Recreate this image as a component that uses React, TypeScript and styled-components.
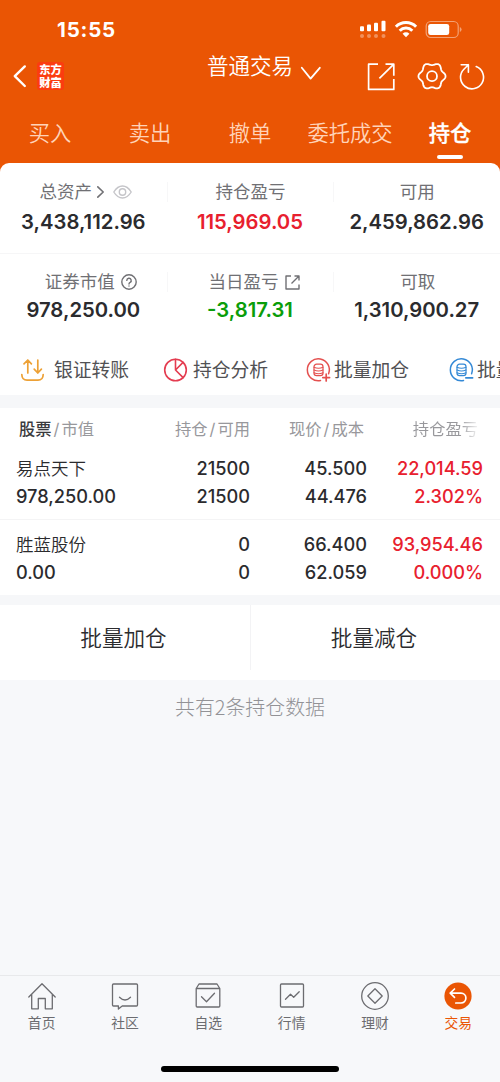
import React from 'react';
import styled, { createGlobalStyle } from 'styled-components';

const ORANGE = '#ea5504';
const RED = '#e8202e';
const GREEN = '#0a9d0a';
const INK = '#2b2b2e';

const GlobalStyle = createGlobalStyle`
  * { box-sizing: border-box; }
  body {
    margin: 0;
    background: #f7f8fa;
    font-family: Inter, 'Noto Sans CJK SC', sans-serif;
    color: ${INK};
  }
  svg { display: block; flex: none; overflow: visible; }
`;

const Screen = styled.div`
  width: 500px;
  height: 1082px;
  display: flex;
  flex-direction: column;
  overflow: hidden;
  background: #f7f8fa;
`;

const Header = styled.header`
  height: 172px;
  flex: none;
  background: ${ORANGE};
  color: #fff;
`;

const StatusBar = styled.div`
  height: 50px;
  padding: 10px 38px 0 57px;
  display: flex;
  justify-content: space-between;
`;

const Clock = styled.span`
  font-size: 20.5px;
  font-weight: 700;
  line-height: 40px;
  letter-spacing: 0.8px;
`;

const StatusIcons = styled.div`
  display: flex;
  padding-top: 10px;
`;

const NavBar = styled.div`
  height: 54px;
  display: grid;
  grid-template-columns: 207px 1fr 133px;
`;

const NavLeft = styled.div`
  display: flex;
  padding: 12px 0 0 13px;
  gap: 11px;
`;

const Logo = styled.div`
  width: 27px;
  height: 28px;
  border-radius: 3px;
  background: #fb3c10;
  font: 900 11.3px/13px 'Noto Sans CJK SC', sans-serif;
  text-align: center;
  padding-top: 1px;
`;

const Title = styled.div`
  display: flex;
  gap: 8px;
  font-size: 21.5px;
  line-height: 32px;
  font-weight: 350;
  white-space: nowrap;
  svg { margin-top: 17px; }
`;

const NavRight = styled.div`
  display: flex;
  padding-top: 12px;
`;

const Tabs = styled.nav`
  display: grid;
  grid-template-columns: repeat(5, 100px);
  height: 59px;
`;

const Tab = styled.div<{ $active?: boolean }>`
  display: flex;
  flex-direction: column;
  align-items: center;
  font-size: 21.3px;
  line-height: 30px;
  padding-top: 14px;
  font-weight: ${p => (p.$active ? 500 : 350)};
  -webkit-text-stroke: ${p => (p.$active ? '0.3px #fff' : '0')};
  color: ${p => (p.$active ? '#fff' : '#ffd3b8')};
  white-space: nowrap;
  &::after {
    content: '';
    width: 26px;
    height: 4px;
    margin-top: 7px;
    border-radius: 2px;
    background: ${p => (p.$active ? '#fff' : 'transparent')};
  }
`;

const Summary = styled.section`
  height: 232px;
  flex: none;
  margin-top: -9px;
  background: #fff;
  border-radius: 9px 9px 0 0;
`;

const SummaryRow = styled.div<{ $height: number; $top: number }>`
  display: grid;
  grid-template-columns: repeat(3, 1fr);
  height: ${p => p.$height}px;
  padding-top: ${p => p.$top}px;
  & + & { border-top: 1px solid #f6f6f7; }
`;

const Stat = styled.div<{ $gap: number }>`
  display: flex;
  flex-direction: column;
  align-items: center;
  gap: ${p => p.$gap}px;
`;

const StatLabel = styled.div<{ $indent?: number }>`
  display: flex;
  align-items: center;
  justify-content: center;
  align-self: stretch;
  height: 20px;
  padding-left: ${p => p.$indent ?? 0}px;
  font-size: 17.5px;
  line-height: 20px;
  color: #707074;
  white-space: nowrap;
  ${Stat} + ${Stat} > & { border-left: 1px solid #f7f7f8; }
`;

const StatValue = styled.div<{ $color?: string }>`
  font-size: 20.3px;
  line-height: 26px;
  font-weight: 580;
  color: ${p => p.$color ?? INK};
`;

const Shortcuts = styled.div`
  display: flex;
  height: 50px;
  padding-left: 21px;
  overflow: hidden;
`;

const Shortcut = styled.div<{ $gap: number }>`
  display: flex;
  flex: none;
  width: 143px;
  height: 50px;
  align-items: center;
  gap: ${p => p.$gap}px;
  font-size: 18.8px;
  line-height: 28px;
  color: #515154;
  white-space: nowrap;
`;

const ShortcutText = styled.span`
  padding-top: 2px;
`;

const Band = styled.div<{ $height: number }>`
  flex: none;
  height: ${p => p.$height}px;
  background: #f6f7f9;
`;

const Holdings = styled.section`
  flex: none;
  background: #fff;
`;

const HoldingGrid = styled.div`
  display: grid;
  grid-template-columns: 134px 100px 117px 116px;
  padding: 0 16px;
`;

const HeadRow = styled(HoldingGrid)`
  height: 46px;
  padding-top: 11px;
  font-size: 16.3px;
  line-height: 20px;
  color: #98989c;
`;

const HeadCell = styled.div<{ $shift?: number; $fade?: boolean }>`
  text-align: right;
  white-space: nowrap;
  padding-right: ${p => p.$shift ?? 0}px;
  i { font-style: normal; padding: 0 2px; }
  &:first-child { text-align: left; padding-left: 3px; }
  b { color: #3a3a3d; font-weight: 500; }
  ${p => p.$fade && 'background: linear-gradient(90deg, #98989c 80%, #f4f4f4 96%); background-clip: text; color: transparent;'}
`;

const HoldingRow = styled(HoldingGrid)<{ $height: number }>`
  height: ${p => p.$height}px;
  & + & { border-top: 1px solid #f4f4f5; padding-top: 10px; }
`;

const Cell = styled.div<{ $color?: string }>`
  text-align: right;
  font-size: 18.2px;
  font-weight: 540;
  line-height: 28px;
  white-space: nowrap;
  color: ${p => p.$color ?? INK};
  &:first-child { text-align: left; }
`;

const StockName = styled.div`
  height: 28px;
  padding-top: 1px;
  font-size: 17.5px;
  font-weight: 350;
`;

const Actions = styled.div`
  display: grid;
  grid-template-columns: 1fr 1fr;
  height: 75px;
  flex: none;
  background: #fff;
`;

const Action = styled.div`
  height: 65px;
  padding-right: 3px;
  text-align: center;
  font-size: 21.6px;
  line-height: 66px;
  font-weight: 350;
  & + & { border-left: 1px solid #f3f3f5; }
`;

const Note = styled.div`
  flex: 1;
  padding-top: 12px;
  text-align: center;
  font-size: 19.9px;
  line-height: 30px;
  font-weight: 300;
  color: #929296;
  font-family: 'Noto Sans CJK SC', sans-serif;
`;

const BottomBar = styled.nav`
  flex: none;
  height: 91px;
  padding-top: 6px;
  border-top: 1px solid #e8e9eb;
  display: grid;
  grid-template-columns: repeat(6, 1fr);
`;

const BottomItem = styled.div<{ $active?: boolean }>`
  display: flex;
  flex-direction: column;
  align-items: center;
  gap: 3px;
  font-size: 13.8px;
  line-height: 20px;
  color: ${p => (p.$active ? ORANGE : '#6c6c70')};
`;

const HomeIndicator = styled.div`
  flex: none;
  width: 178px;
  height: 6px;
  margin: 0 auto 10px;
  border-radius: 3px;
  background: #000;
`;

type IconProps = { w: number; h: number; color?: string; sw?: number; ml?: number; children: React.ReactNode };
const Glyph = styled.svg<{ $ml: number }>`
  margin-left: ${p => p.$ml}px;
`;
const Icon = ({ w, h, color = 'currentColor', sw = 1.5, ml = 0, children }: IconProps) => (
  <Glyph $ml={ml} width={w} height={h} viewBox={`0 0 ${w} ${h}`} fill="none" stroke={color} strokeWidth={sw} strokeLinejoin="round" strokeLinecap="round">
    {children}
  </Glyph>
);

const Coins = ({ color, plus }: { color: string; plus?: boolean }) => (
  <Icon w={23} h={24} color={color} sw={1.5}>
    <path d="M13.5 22.6A11 11 0 1 1 21.6 15.8" />
    <rect x="7" y="6.2" width="9" height="11.5" rx="2.6" strokeWidth="1.2" />
    <path d="M7 9.2q4.5 2 9 0M7 12q4.5 2 9 0M7 14.8q4.5 2 9 0" strokeWidth="1.1" />
    <path d={plus ? 'M15.8 19.6h6.8M19.2 16.2V23' : 'M15.8 19.8h6.8'} strokeWidth="1.7" />
  </Icon>
);

// Six-lobed gear outline, sampled in polar coordinates around (14, 14).
const gearOutline = Array.from({ length: 120 }, (_, i) => {
  const a = (i / 120) * Math.PI * 2;
  const r = 12.3 + 1.25 * Math.cos(6 * a);
  return `${(14 + r * Math.cos(a)).toFixed(2)},${(14.2 + r * Math.sin(a)).toFixed(2)}`;
}).join(' ');

const holdings = [
  { name: '易点天下', value: '978,250.00', qty: '21500', avail: '21500', price: '45.500', cost: '44.476', pl: '22,014.59', pct: '2.302%', height: 65 },
  { name: '胜蓝股份', value: '0.00', qty: '0', avail: '0', price: '66.400', cost: '62.059', pl: '93,954.46', pct: '0.000%', height: 76 },
];

export default function App() {
  return (
    <Screen>
      <GlobalStyle />
      <Header>
        <StatusBar>
          <Clock>15:55</Clock>
          <StatusIcons>
            <Glyph $ml={0} width="26" height="18" viewBox="0 0 26 18" fill="#fff">
              <rect x="0" y="6.2" width="4" height="5" rx="1" />
              <rect x="7" y="4.6" width="4" height="6.6" rx="1" />
              <rect x="14" y="2.8" width="4" height="8.4" rx="1" />
              <rect x="21.5" y="0.8" width="4" height="10.4" rx="1" />
              <g opacity=".35">
                <circle cx="2" cy="16" r="2" /><circle cx="9" cy="16" r="2" /><circle cx="16" cy="16" r="2" /><circle cx="23.5" cy="16" r="2" />
              </g>
            </Glyph>
            <Glyph $ml={9} width="22" height="18" viewBox="0 0 22 18" fill="none" stroke="#fff" strokeWidth="3">
              <path d="M.9 6.8a14.3 14.3 0 0 1 20.2 0" />
              <path d="M4.7 10.7a8.9 8.9 0 0 1 12.6 0" />
              <path d="M11 17.2 7.6 13.7a4.8 4.8 0 0 1 6.8 0z" fill="#fff" stroke="none" />
            </Glyph>
            <Glyph $ml={9} width="36" height="18" viewBox="0 0 36 18" fill="none">
              <rect x=".2" y="1.5" width="32" height="16" rx="4.6" stroke="#fff" strokeOpacity=".45" strokeWidth="1.2" />
              <rect x="2.2" y="3.9" width="21" height="11.2" rx="2.4" fill="#fff" />
              <path d="M33.8 7v5q1.8-.8 1.8-2.5T33.8 7z" fill="#fff" fillOpacity=".45" />
            </Glyph>
          </StatusIcons>
        </StatusBar>
        <NavBar>
          <NavLeft>
            <Icon w={13} h={28} sw={2.4}><path d="M11.8 4.4 1.8 14.2l10 9.8" /></Icon>
            <Logo>东方<br />财富</Logo>
          </NavLeft>
          <Title>
            普通交易
            <Icon w={19} h={12} sw={1.8}><path d="M.8 .8 9.6 11.6 18.8 .8" /></Icon>
          </Title>
          <NavRight>
            <Icon w={28} h={28} sw={1.7}><path d="M11 2.2H1.6v25.2h25.2V17M12.4 16.4 26.6 2.4M18.5 2.2h8.3v11.6" strokeLinecap="butt" strokeLinejoin="round" /></Icon>
            <Icon w={28} h={28} sw={1.8} ml={23}>
              <polygon points={gearOutline} />
              <circle cx="14" cy="14.2" r="5" />
            </Icon>
            <Icon w={26} h={28} sw={1.6} ml={13}><path d="M17.2 4.6A11.5 11.5 0 1 1 4.9 7.2L9.4 2.7M2.2 2.7h7.2v7.6" /></Icon>
          </NavRight>
        </NavBar>
        <Tabs>
          {['买入', '卖出', '撤单', '委托成交', '持仓'].map(t => <Tab key={t} $active={t === '持仓'}>{t}</Tab>)}
        </Tabs>
      </Header>

      <Summary>
        <SummaryRow $height={90} $top={19}>
          <Stat $gap={7}>
            <StatLabel $indent={5}>
              总资产
              <Icon w={7} h={12} sw={1.6} ml={5}><path d="M.8 .8 6.2 6 .8 11.2" /></Icon>
              <Icon w={19} h={14} sw={1.4} color="#c5c5c9" ml={9}>
                <path d="M.8 7Q4.5 1 9.5 1T18.2 7Q14.5 13 9.5 13T.8 7Z" /><circle cx="9.5" cy="7" r="3.2" />
              </Icon>
            </StatLabel>
            <StatValue>3,438,112.96</StatValue>
          </Stat>
          <Stat $gap={7}><StatLabel>持仓盈亏</StatLabel><StatValue $color={RED}>115,969.05</StatValue></Stat>
          <Stat $gap={7}><StatLabel>可用</StatLabel><StatValue>2,459,862.96</StatValue></Stat>
        </SummaryRow>
        <SummaryRow $height={92} $top={18}>
          <Stat $gap={5}>
            <StatLabel $indent={15}>
              证券市值
              <Icon w={16} h={16} sw={1.4} ml={6}>
                <circle cx="8" cy="8" r="7.2" /><path d="M5.8 6.4a2.2 2.2 0 1 1 3.3 1.9Q8 8.9 8 10M8 12v.1" />
              </Icon>
            </StatLabel>
            <StatValue>978,250.00</StatValue>
          </Stat>
          <Stat $gap={5}>
            <StatLabel $indent={8}>
              当日盈亏
              <Icon w={15} h={15} sw={1.4} ml={7}><path d="M6 1H1v13h13V9.5M6.5 8.5 14 1M9.5 1H14v4.5" strokeLinecap="butt" /></Icon>
            </StatLabel>
            <StatValue $color={GREEN}>-3,817.31</StatValue>
          </Stat>
          <Stat $gap={5}><StatLabel $indent={1}>可取</StatLabel><StatValue>1,310,900.27</StatValue></Stat>
        </SummaryRow>
        <Shortcuts>
          <Shortcut $gap={10}>
            <Icon w={23} h={24} color="#eda136" sw={1.7}>
              <path d="M6.8 15V2M3 5.8 6.8 2l3.6 3.8M16.8 2v13M13.2 11.2l3.6 3.8 3.6-3.8M.8 16.5Q1 22.2 6 22.2H17Q22 22.2 22.2 16.5" />
            </Icon>
            <ShortcutText>银证转账</ShortcutText>
          </Shortcut>
          <Shortcut $gap={6}>
            <Icon w={23} h={24} color="#e43c50" sw={1.6}>
              <circle cx="11.5" cy="12" r="10.8" /><path d="M11.5 1.2V12L19 4.4M11.5 12l7.6 7.6" />
            </Icon>
            <ShortcutText>持仓分析</ShortcutText>
          </Shortcut>
          <Shortcut $gap={4}><Coins color="#e4504f" plus /><ShortcutText>批量加仓</ShortcutText></Shortcut>
          <Shortcut $gap={4}><Coins color="#3489d6" /><ShortcutText>批量减仓</ShortcutText></Shortcut>
        </Shortcuts>
      </Summary>
      <Band $height={13} />
      <Holdings>
        <HeadRow>
          <HeadCell><b>股票</b><i>/</i>市值</HeadCell>
          <HeadCell>持仓<i>/</i>可用</HeadCell>
          <HeadCell $shift={3}>现价<i>/</i>成本</HeadCell>
          <HeadCell $shift={5} $fade>持仓盈亏</HeadCell>
        </HeadRow>
        {holdings.map(h => (
          <HoldingRow key={h.name} $height={h.height}>
            <Cell><StockName>{h.name}</StockName>{h.value}</Cell>
            <Cell>{h.qty}<br />{h.avail}</Cell>
            <Cell>{h.price}<br />{h.cost}</Cell>
            <Cell $color={RED}>{h.pl}<br />{h.pct}</Cell>
          </HoldingRow>
        ))}
      </Holdings>
      <Band $height={10} />
      <Actions>
        <Action>批量加仓</Action>
        <Action>批量减仓</Action>
      </Actions>
      <Note>共有2条持仓数据</Note>
      <BottomBar>
        <BottomItem>
          <Icon w={28} h={28} sw={1.3}><path d="M.8 15 14 1.8 27.2 15M3.7 12.4V26.8H10.3V16.5h7V26.8h7V12.4" /></Icon>
          首页
        </BottomItem>
        <BottomItem>
          <Icon w={28} h={28} sw={1.3}><path d="M2.5 2h23q1 0 1 1v20q0 1-1 1H11.2L7.4 27V24H2.5q-1 0-1-1V3q0-1 1-1zM8.5 15.2Q14 20.8 19.5 15.2" /></Icon>
          社区
        </BottomItem>
        <BottomItem>
          <Icon w={28} h={28} sw={1.3}><path d="M2.2 6.5 5 2h18l2.8 4.5V24q0 1-1 1H3.2q-1 0-1-1ZM2.2 6.5h23.6M7.5 14.8l5 5 8-8.5" /></Icon>
          自选
        </BottomItem>
        <BottomItem>
          <Icon w={28} h={28} sw={1.3}><rect x="2.5" y="2" width="23" height="23" rx="1" /><path d="m7.5 17.3 5-5 3.2 3 5.5-5.6" /></Icon>
          行情
        </BottomItem>
        <BottomItem>
          <Icon w={28} h={28} sw={1.3}><circle cx="14" cy="14" r="13.3" /><path d="m14 6.8 7.2 7.2-7.2 7.2L6.8 14Z" /></Icon>
          理财
        </BottomItem>
        <BottomItem $active>
          <Icon w={28} h={28} color="#fff" sw={1.7}><circle cx="14" cy="14" r="13.6" fill={ORANGE} stroke="none" /><path d="M10.5 7 6.2 11.2l4.3 4.2M6.5 11.2H17a4.5 4.5 0 0 1 0 9.8h-5.2" /></Icon>
          交易
        </BottomItem>
      </BottomBar>
      <HomeIndicator />
    </Screen>
  );
}
